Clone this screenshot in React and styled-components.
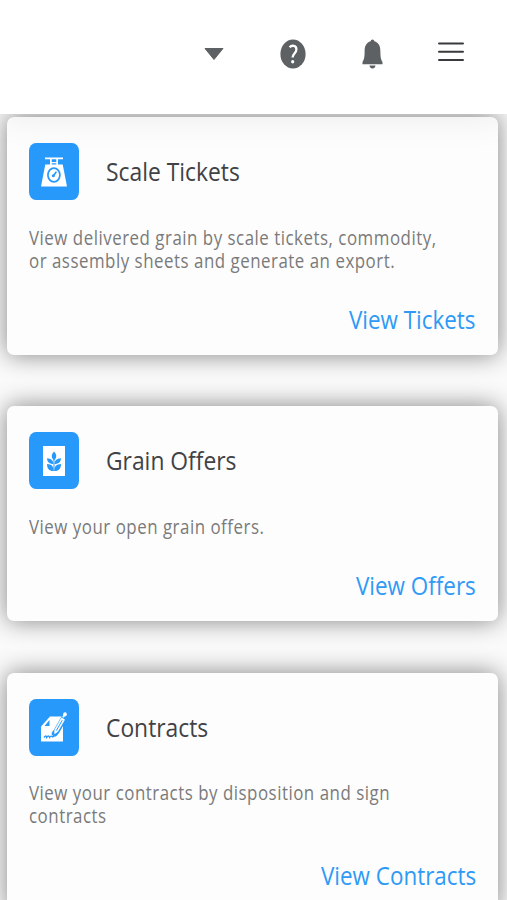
import React from 'react';
import styled, { createGlobalStyle } from 'styled-components';

const GlobalStyle = createGlobalStyle`
  * { box-sizing: border-box; }
  body {
    margin: 0;
    background: #fafafa;
    font-family: "Open Sans", "Noto Sans", sans-serif;
    overflow: hidden;
  }
`;

const Page = styled.div`
  height: 900px;
  display: flex;
  flex-direction: column;
  overflow: hidden;
`;

const Header = styled.header`
  position: relative;
  z-index: 1;
  flex: none;
  height: 114px;
  padding: 38px 40px 44px 0;
  display: flex;
  align-items: center;
  justify-content: flex-end;
  gap: 47px;
  background: #fff;
  box-shadow: 0 2px 36px rgba(0, 0, 0, 0.08);
`;

const IconButton = styled.button`
  width: 32px;
  height: 32px;
  padding: 0;
  border: 0;
  background: none;
  display: flex;
  align-items: center;
  justify-content: center;
  color: #5d6164;
`;

const Cards = styled.main`
  flex: none;
  display: flex;
  flex-direction: column;
  gap: 51.4px;
  padding: 3px 9px 0 7px;
`;

const Card = styled.section`
  display: flex;
  flex-direction: column;
  padding: 26px 22px 20px;
  border-radius: 7px;
  background: #fdfdfd;
  box-shadow: 0 0 25px rgba(0, 0, 0, 0.48);
`;

const CardHeader = styled.div`
  display: flex;
  align-items: center;
  gap: 27px;
`;

const Tile = styled.div`
  width: 50px;
  height: 57px;
  border-radius: 7px / 8px;
  background: #2699fb;
  display: flex;
  align-items: center;
  justify-content: center;
`;

const Title = styled.h2`
  margin: 0 0 1px;
  font-size: 26.2px;
  font-weight: 400;
  line-height: 36px;
  color: #414245;
  white-space: nowrap;
  transform: scaleX(0.872);
  transform-origin: left;
`;

const Description = styled.p`
  margin: 25.5px 0 33.5px;
  font-size: 19.2px;
  line-height: 23px;
  letter-spacing: 0.58px;
  color: #7a7a7a;
  white-space: pre;
  transform: scaleX(0.88);
  transform-origin: left;
`;

const CardLink = styled.a`
  align-self: flex-end;
  font-size: 25.6px;
  line-height: 30px;
  color: #2e9af5;
  white-space: nowrap;
  transform: scaleX(0.876);
  transform-origin: right;
`;

const ScaleIcon = () => (
  <svg width="26" height="30" viewBox="0 0 26 30">
    <path d="M4 .6h18v1.700H4zM9 1h1.700v7H9zM15.300 1H17v7h-1.700zM9 5h8v1.200H9z" fill="#fff" />
    <path d="M4.300 7.500h17.400L26 29.500H0z" fill="#fff" />
    <ellipse cx="12.900" cy="18" rx="6" ry="6.900" fill="none" stroke="#2699fb" strokeWidth="1.700" />
    <path d="M12.800 18.300l2.200-3.100" stroke="#2699fb" strokeWidth="1.600" strokeLinecap="round" />
    <circle cx="12.300" cy="18.700" r="1.500" fill="#2699fb" />
  </svg>
);

const GrainIcon = () => (
  <svg width="22" height="30" viewBox="0 0 22 30">
    <path d="M0 0h22v30H0z" fill="#fff" />
    <g fill="#2699fb">
      <path d="M11 5.500c3 3 3 6 0 9-3-3-3-6 0-9z" />
      <path d="M4 12.300c4 .2 6.200 2 6.500 5.800-4.200-.2-6.300-2-6.500-5.800zM18 12.300c-4 .2-6.200 2-6.500 5.800 4.200-.2 6.300-2 6.500-5.800z" />
      <path d="M4 18c4.600.2 6.600 2.300 6.700 7C6.300 25.200 4 22.500 4 18zM18 18c-4.600.2-6.600 2.300-6.700 7 4.400.2 6.700-2.500 6.700-7z" />
      <path d="M10.500 14h1v11h-1z" />
    </g>
  </svg>
);

const ContractIcon = () => (
  <svg width="26" height="30" viewBox="0 0 26 30">
    <path d="M9 4.500H22V29.500H0V14.500z" fill="#fff" />
    <path d="M3.500 14L8.500 8V14z" fill="#2699fb" />
    <path d="M24.500 3.500L15.500 19.300l-1.700 2.200" fill="none" stroke="#2699fb" strokeWidth="6" strokeLinecap="round" />
    <path d="M20.600 5.800l3 1.900-7 12-3 2 .1-3.800z" fill="#fff" stroke="#fff" strokeWidth=".6" strokeLinejoin="round" />
    <path d="M21.300 8.200L15.300 18.600" stroke="#2699fb" strokeWidth="1" />
    <path d="M22 5.400l1.800-2.900" stroke="#fff" strokeWidth="1.800" />
    <ellipse cx="24" cy="2.300" rx="1.800" ry="2.100" fill="#fff" />
    <path d="M3 25.500c1.500-2 2.300-2 2.700 0 1.200-2 2.200-2 3 0 1-1.800 1.800-1.600 3-.5l1.500-1" fill="none" stroke="#2699fb" strokeWidth="1.300" />
  </svg>
);

const cards = [
  {
    title: 'Scale Tickets',
    text: 'View delivered grain by scale tickets, commodity,\nor assembly sheets and generate an export.',
    link: 'View Tickets',
    Icon: ScaleIcon,
  },
  { title: 'Grain Offers', text: 'View your open grain offers.', link: 'View Offers', Icon: GrainIcon },
  {
    title: 'Contracts',
    text: 'View your contracts by disposition and sign\ncontracts',
    link: 'View Contracts',
    Icon: ContractIcon,
  },
];

export default function App() {
  return (
    <Page>
      <GlobalStyle />
      <Header>
        <IconButton aria-label="Account">
          <svg width="20" height="12" viewBox="0 0 20 12">
            <path d="M1 .5h18L10 11.500z" fill="currentColor" stroke="currentColor" strokeLinejoin="round" />
          </svg>
        </IconButton>
        <IconButton aria-label="Help">
          <svg width="26" height="30" viewBox="0 0 26 30">
            <ellipse cx="13" cy="15" rx="12.600" ry="14.600" fill="currentColor" />
            <path d="M9.600 8.300c2.300-2.500 6.800-1.900 6.800 2 0 4.200-3.800 4.200-3.800 8.200" fill="none" stroke="#fff" strokeWidth="2.300" />
            <ellipse cx="12.700" cy="22.800" rx="1.600" ry="1.800" fill="#fff" />
          </svg>
        </IconButton>
        <IconButton aria-label="Notifications">
          <svg width="21" height="30" viewBox="0 0 21 30">
            <path d="M10.500.5c1 0 1.600.8 1.800 1.800 4.600 1.300 6.100 5 6.100 10.200 0 5.500.4 8 2.100 10.500v2.200H.5V23c1.700-2.500 2.100-5 2.100-10.500 0-5.200 1.500-8.900 6.100-10.200C8.900 1.300 9.500.5 10.500.5zM7.500 26.600h6c-.3 1.800-1.300 3-3 3s-2.700-1.200-3-3z" fill="currentColor" />
          </svg>
        </IconButton>
        <IconButton aria-label="Menu">
          <svg width="26" height="24" viewBox="0 0 26 24">
            <path d="M1 1.500h24M1 9.800h24M1 18h24" stroke="#393a3d" strokeWidth="2" strokeLinecap="round" />
          </svg>
        </IconButton>
      </Header>
      <Cards>
        {cards.map(({ title, text, link, Icon }) => (
          <Card key={title}>
            <CardHeader>
              <Tile>
                <Icon />
              </Tile>
              <Title>{title}</Title>
            </CardHeader>
            <Description>{text}</Description>
            <CardLink>{link}</CardLink>
          </Card>
        ))}
      </Cards>
    </Page>
  );
}
